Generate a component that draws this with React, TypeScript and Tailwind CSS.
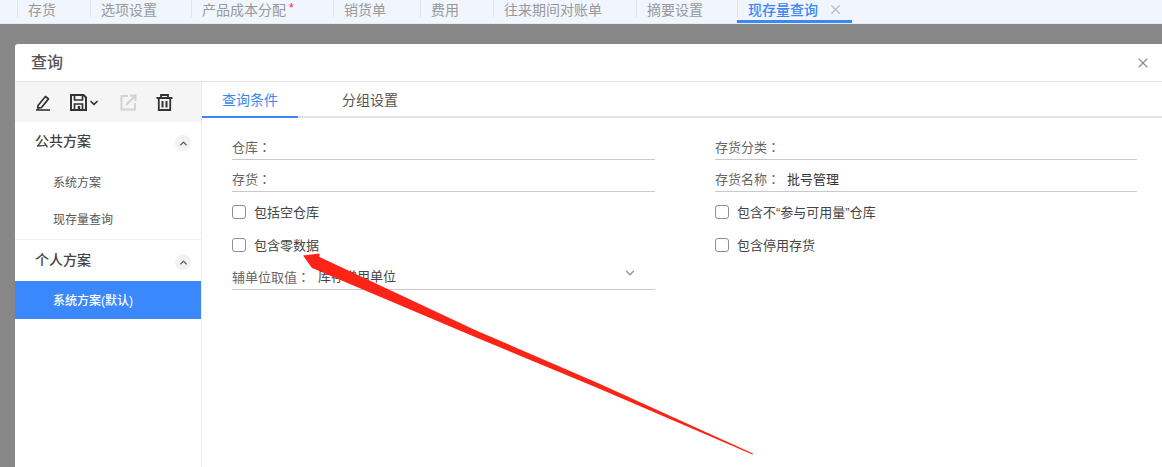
import { ChevronDown, ChevronUp, X } from "lucide-react";

const topTabs = [
  { label: "存货", w: "w-[73px]" },
  { label: "选项设置", w: "w-[101px]" },
  { label: "产品成本分配", w: "w-[142px]", dirty: true },
  { label: "销货单", w: "w-[87px]" },
  { label: "费用", w: "w-[73px]" },
  { label: "往来期间对账单", w: "w-[143px]" },
  { label: "摘要设置", w: "w-[101px]" },
];

function Colon() {
  return <span className="font-['Noto_Sans_CJK_TC',sans-serif]">：</span>;
}

function Check({ label }: { label: string }) {
  return (
    <label className="flex h-[33px] items-center text-[13px] text-[#444]">
      <span className="mr-[8px] h-[14px] w-[14px] rounded-[3px] border border-[#8f8f8f] bg-white" />
      <span className="pt-[2px]">{label}</span>
    </label>
  );
}

function Field({ label, value, w = "w-auto" }: { label: string; value?: string; w?: string }) {
  return (
    <div className="flex h-[32px] items-center border-b border-[#c9c9c9] pt-[7px] text-[13px]">
      <span className={`${w} text-[#666]`}>
        {label}
        <Colon />
      </span>
      {value && <span className="pt-[2px] text-[#333]">{value}</span>}
    </div>
  );
}

function GroupHeader({ label }: { label: string }) {
  return (
    <div className="flex h-[38px] items-center justify-between pl-[20px] pr-[10px] text-[14px] font-medium text-[#444]">
      <span className="pt-[1px]">{label}</span>
      <span className="mt-[4px] flex h-[16px] w-[16px] items-center justify-center rounded-full bg-[#f2f2f2]">
        <ChevronUp className="h-[11px] w-[11px] text-[#555]" strokeWidth={3} />
      </span>
    </div>
  );
}

export default function App() {
  return (
    <div className="relative flex h-[467px] w-[1162px] flex-col overflow-hidden bg-[#878787] font-['Liberation_Sans','Noto_Sans_CJK_SC',sans-serif]">
      {/* top tabs */}
      <div className="flex h-[24px] shrink-0 border-b border-[#e6ebf3] bg-[#f0f5fe] pl-[17px]">
        {topTabs.map((t) => (
          <div key={t.label} className={`${t.w} flex shrink-0 items-start text-[14px] leading-[20px] text-[#999]`}>
            <span className="mr-[10px] h-[17px] w-px bg-[#dfe3e8]" />
            {t.label}
            {t.dirty && <span className="ml-[3px] text-[12px] leading-[16px] text-[#f5222d]">*</span>}
          </div>
        ))}
        <div className="flex h-[23px] w-[115px] shrink-0 items-start border-b-[3px] border-[#3b88f5] text-[14px] font-medium leading-[20px] text-[#3b88f5]">
          <span className="mr-[10px] h-[17px] w-px bg-[#dfe3e8]" />
          现存量查询
          <X className="ml-[10px] mt-[2px] h-[15px] w-[15px] text-[#bbb]" strokeWidth={2} />
        </div>
      </div>

      {/* modal */}
      <div className="ml-[15px] mt-[20px] flex min-h-0 flex-1 flex-col rounded-tl-[3px] bg-white">
        <div className="flex h-[38px] shrink-0 items-center justify-between border-b border-[#e5e5e5] pl-[16px] pr-[11px]">
          <span className="text-[16px] font-medium text-[#555]">查询</span>
          <X className="h-[16px] w-[16px] text-[#888]" strokeWidth={1.6} />
        </div>

        <div className="flex min-h-0 flex-1">
          {/* scheme sidebar */}
          <div className="w-[187px] shrink-0 border-r border-[#ececec]">
            <div className="flex h-[40px] items-center bg-[#f5f5f5] pl-[20px] pt-[1px]">
              <svg width="16" height="17" viewBox="0 0 16 17" fill="none" stroke="#333" strokeWidth="1.7">
                <path d="M3 11.5 10.5 2.5l3 2.4-7 8.6-3.7.6z" strokeLinejoin="round" />
                <path d="M1 16h14" strokeWidth="1.6" />
              </svg>
              <svg className="ml-[19px]" width="17" height="17" viewBox="0 0 17 17" fill="none" stroke="#333" strokeWidth="2">
                <path d="M1 1h12.5L16 3.5V16H1z" />
                <path d="M4.5 1v5h8V1M4.500 16v-6h8v6" strokeWidth="1.7" />
                <path d="M9 12v4" strokeWidth="2.4" />
              </svg>
              <ChevronDown className="ml-[1px] h-[12px] w-[12px] text-[#333]" strokeWidth={3.4} />
              <svg className="ml-[20px]" width="17" height="17" viewBox="0 0 17 17" fill="none" stroke="#d2d2d2" strokeWidth="1.9">
                <path d="M8 2H1.5v13.500H15V9" />
                <path d="M6 11 15 2M10 1.500h5.500V7" />
              </svg>
              <svg className="ml-[19px]" width="17" height="17" viewBox="0 0 17 17" fill="none" stroke="#333" strokeWidth="1.8">
                <path d="M0.5 4h16M5 4V1h7v3" />
                <path d="M2.8 4v12h11.4V4" />
                <path d="M6.500 7v6.500M10.500 7v6.500" strokeWidth="2" />
              </svg>
            </div>

            <GroupHeader label="公共方案" />
            <div className="mt-[3px] flex h-[38px] items-center pl-[38px] pt-[2px] text-[12px] text-[#555]">系统方案</div>
            <div className="flex h-[36px] items-center pl-[38px] pt-[2px] text-[12px] text-[#555]">现存量查询</div>
            <div className="mt-[2px] border-t border-[#f0f0f0] pb-[2px] pt-[1px]">
              <GroupHeader label="个人方案" />
            </div>
            <div className="flex h-[38px] items-center bg-[#3b88fd] pl-[38px] pt-[2px] text-[12px] font-medium text-white">
              系统方案(默认)
            </div>
          </div>

          {/* form side */}
          <div className="min-w-0 flex-1">
            <div className="flex h-[36px] border-b-2 border-[#e2e2e2] text-[14px]">
              <div className="-mb-[2px] flex h-[36px] w-[96px] items-center justify-center border-b-[2px] border-[#3b88f5] pt-[2px] text-[#3b88f5]">
                查询条件
              </div>
              <div className="ml-[44px] flex h-[34px] items-center pt-[2px] text-[#555]">分组设置</div>
            </div>

            <div className="grid grid-cols-[423px_422px] gap-x-[60px] pl-[30px] pt-[10px]">
              <div>
                <Field label="仓库" />
                <Field label="存货" />
                <div className="mt-[3px]">
                  <Check label="包括空仓库" />
                  <Check label="包含零数据" />
                </div>
                <div className="relative -mt-[3px] flex h-[32px] items-center border-b border-[#c9c9c9] pt-[7px] text-[13px]">
                  <span className="w-[86px] text-[#666]">
                    辅单位取值
                    <Colon />
                  </span>
                  <span className="text-[#444]">库存常用单位</span>
                  <ChevronDown className="absolute right-[18px] top-[8px] h-[14px] w-[14px] text-[#999]" strokeWidth={2.6} />
                </div>
              </div>
              <div>
                <Field label="存货分类" />
                <Field label="存货名称" value="批号管理" w="w-[72px]" />
                <div className="mt-[3px]">
                  <Check label="包含不“参与可用量”仓库" />
                  <Check label="包含停用存货" />
                </div>
              </div>
            </div>
          </div>
        </div>
      </div>

      {/* red annotation arrow drawn over the screenshot */}
      <svg className="pointer-events-none absolute left-0 top-0" width="1162" height="467" viewBox="0 0 1162 467">
        <path
          d="M303 255.500 319.500 253.500 319.500 257 475 330 600 384 753 453.500 752.500 454.500 600 389 475 337 318 270.500 312 268z"
          fill="#fb2417"
        />
      </svg>
    </div>
  );
}
